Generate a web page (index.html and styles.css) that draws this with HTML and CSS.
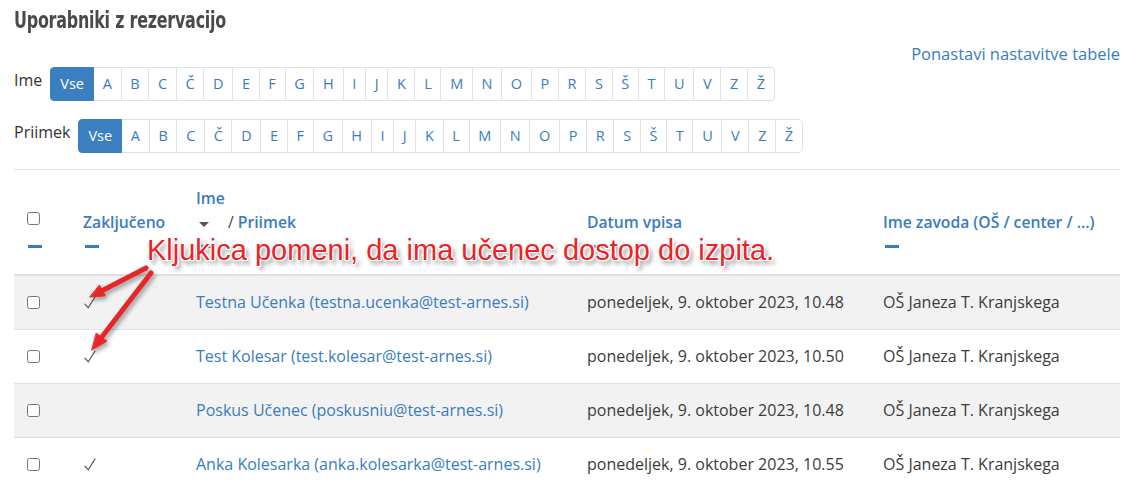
FILE: index.html
```html
<!DOCTYPE html>
<html lang="sl">
<head>
<meta charset="utf-8">
<title>Uporabniki z rezervacijo</title>
<link rel="stylesheet" href="styles.css">
</head>
<body>
<div class="page">
  <h2 class="title">Uporabniki z rezervacijo</h2>
  <div class="reset"><a href="#">Ponastavi nastavitve tabele</a></div>

  <div class="initials">
    <span class="lbl">Ime</span>
    <ul class="pag">
      <li class="active"><a href="#">Vse</a></li>
      <li><a href="#">A</a></li><li><a href="#">B</a></li><li><a href="#">C</a></li><li><a href="#">Č</a></li><li><a href="#">D</a></li><li><a href="#">E</a></li><li><a href="#">F</a></li><li><a href="#">G</a></li><li><a href="#">H</a></li><li><a href="#">I</a></li><li><a href="#">J</a></li><li><a href="#">K</a></li><li><a href="#">L</a></li><li><a href="#">M</a></li><li><a href="#">N</a></li><li><a href="#">O</a></li><li><a href="#">P</a></li><li><a href="#">R</a></li><li><a href="#">S</a></li><li><a href="#">Š</a></li><li><a href="#">T</a></li><li><a href="#">U</a></li><li><a href="#">V</a></li><li><a href="#">Z</a></li><li><a href="#">Ž</a></li>
    </ul>
  </div>
  <div class="initials second">
    <span class="lbl">Priimek</span>
    <ul class="pag">
      <li class="active"><a href="#">Vse</a></li>
      <li><a href="#">A</a></li><li><a href="#">B</a></li><li><a href="#">C</a></li><li><a href="#">Č</a></li><li><a href="#">D</a></li><li><a href="#">E</a></li><li><a href="#">F</a></li><li><a href="#">G</a></li><li><a href="#">H</a></li><li><a href="#">I</a></li><li><a href="#">J</a></li><li><a href="#">K</a></li><li><a href="#">L</a></li><li><a href="#">M</a></li><li><a href="#">N</a></li><li><a href="#">O</a></li><li><a href="#">P</a></li><li><a href="#">R</a></li><li><a href="#">S</a></li><li><a href="#">Š</a></li><li><a href="#">T</a></li><li><a href="#">U</a></li><li><a href="#">V</a></li><li><a href="#">Z</a></li><li><a href="#">Ž</a></li>
    </ul>
  </div>

  <table class="tbl">
    <colgroup>
      <col class="c1"><col class="c2"><col class="c3"><col class="c4"><col class="c5">
    </colgroup>
    <thead>
      <tr>
        <th><div class="hline"><input type="checkbox" class="cb"></div><div class="dashline"><span class="dash"></span></div></th>
        <th><div class="hline"><a href="#">Zaključeno</a></div><div class="dashline"><span class="dash"></span></div></th>
        <th><div class="hline"><a href="#">Ime</a></div><div class="hline"><span class="caret"></span><span class="slash">/</span> <a href="#">Priimek</a></div><div class="dashline"><span class="dash"></span></div></th>
        <th><div class="hline"><a href="#">Datum vpisa</a></div><div class="dashline"><span class="dash"></span></div></th>
        <th><div class="hline"><a href="#">Ime zavoda (OŠ / center / ...)</a></div><div class="dashline"><span class="dash"></span></div></th>
      </tr>
    </thead>
    <tbody>
      <tr class="odd">
        <td><input type="checkbox" class="cb"></td>
        <td><svg class="tick" width="12" height="13" viewBox="0 0 12 13"><path d="M1 8.2 L4.3 11.8 L11 1"/></svg></td>
        <td><a href="#">Testna Učenka (testna.ucenka@test-arnes.si)</a></td>
        <td>ponedeljek, 9. oktober 2023, 10.48</td>
        <td>OŠ Janeza T. Kranjskega</td>
      </tr>
      <tr>
        <td><input type="checkbox" class="cb"></td>
        <td><svg class="tick" width="12" height="13" viewBox="0 0 12 13"><path d="M1 8.2 L4.3 11.8 L11 1"/></svg></td>
        <td><a href="#">Test Kolesar (test.kolesar@test-arnes.si)</a></td>
        <td>ponedeljek, 9. oktober 2023, 10.50</td>
        <td>OŠ Janeza T. Kranjskega</td>
      </tr>
      <tr class="odd">
        <td><input type="checkbox" class="cb"></td>
        <td></td>
        <td><a href="#">Poskus Učenec (poskusniu@test-arnes.si)</a></td>
        <td>ponedeljek, 9. oktober 2023, 10.48</td>
        <td>OŠ Janeza T. Kranjskega</td>
      </tr>
      <tr>
        <td><input type="checkbox" class="cb"></td>
        <td><svg class="tick" width="12" height="13" viewBox="0 0 12 13"><path d="M1 8.2 L4.3 11.8 L11 1"/></svg></td>
        <td><a href="#">Anka Kolesarka (anka.kolesarka@test-arnes.si)</a></td>
        <td>ponedeljek, 9. oktober 2023, 10.55</td>
        <td>OŠ Janeza T. Kranjskega</td>
      </tr>
    </tbody>
  </table>
</div>

<div class="annot">Kljukica pomeni, da ima učenec dostop do izpita.</div>
<svg class="arrows" width="1131" height="503" viewBox="0 0 1131 503" aria-hidden="true">
  <g fill="#e8262a" stroke="#e8262a" stroke-linecap="round">
    <line x1="146" y1="268" x2="102.4" y2="290.5" stroke-width="5"/>
    <polygon points="90,297 105.2,295.8 99.6,285.2" stroke-width="1"/>
    <line x1="151" y1="273" x2="101.6" y2="337.2" stroke-width="5"/>
    <polygon points="92,350 106.8,341.1 96.4,333.3" stroke-width="1"/>
  </g>
</svg>
</body>
</html>
```

FILE: styles.css
```css
* { box-sizing: border-box; }
html, body { margin: 0; padding: 0; background: #fff; }
body {
  font-family: "Open Sans", "Noto Sans", sans-serif;
  font-size: 15px;
  color: #373a3c;
  width: 1131px;
  height: 503px;
  overflow: hidden;
  position: relative;
}
a { color: #3a7cc1; text-decoration: none; }

.page { padding: 0 11px 0 14px; }

.title {
  margin: 0;
  padding-top: 5px;
  height: 40px;
  font-family: "DejaVu Sans Condensed", "DejaVu Sans", sans-serif;
  font-stretch: condensed;
  font-weight: bold;
  font-size: 23px;
  line-height: 30px;
  color: #4a4a4a;
  transform: scaleX(0.77);
  transform-origin: left center;
  letter-spacing: -0.3px;
  white-space: nowrap;
}

.reset {
  text-align: right;
  height: 20px;
  line-height: 20px;
  margin-top: 4px;
  font-size: 16.5px;
}

.initials {
  display: flex;
  align-items: center;
  margin-top: 3px;
}
.initials.second { margin-top: 18px; }
.lbl {
  font-size: 16px;
  color: #333;
  margin-right: 8px;
  position: relative;
  top: -4px;
}
.pag {
  display: flex;
  list-style: none;
  margin: 0;
  padding: 0;
}
.pag li a {
  display: block;
  height: 34px;
  line-height: 32px;
  padding: 0 8.7px;
  border: 1px solid #dee2e6;
  margin-left: -1px;
  font-size: 14.5px;
  color: #3a7cc1;
  background: #fff;
}
.pag li:first-child a { margin-left: 0; border-radius: 4px 0 0 4px; }
.pag li:last-child a { border-radius: 0 4px 4px 0; }
.pag li.active a {
  background: #3a80c0;
  border-color: #3a80c0;
  color: #fff;
  padding: 0 9px;
  position: relative;
  z-index: 1;
}

.tbl {
  margin-top: 16px;
  width: 1106px;
  border-collapse: collapse;
  table-layout: fixed;
  border-top: 1px solid #dee2e6;
}
.c1 { width: 57px; }
.c2 { width: 113px; }
.c3 { width: 391px; }
.c4 { width: 296px; }
.c5 { width: 249px; }

.tbl th {
  text-align: left;
  vertical-align: bottom;
  padding: 16px 12px 16px 12px;
  font-weight: 600;
  font-size: 15.7px;
  border-bottom: 2px solid #dee2e6;
}
.hline { height: 24px; line-height: 24px; display: flex; align-items: center; white-space: nowrap; }
.dashline { height: 24px; display: flex; align-items: center; }
.dash { display: inline-block; width: 14px; height: 3px; background: #3a7cc1; margin-left: 2px; }
.tbl th .cb { position: relative; top: -4px; }
.caret {
  display: inline-block;
  width: 0; height: 0;
  border-left: 5px solid transparent;
  border-right: 5px solid transparent;
  border-top: 5px solid #555;
  margin-left: 3px;
  margin-right: 19px;
  position: relative;
  top: 2px;
}
.slash { color: #444; margin-right: 4px; font-weight: 400; }

.tbl td {
  height: 54px;
  padding: 0 12px;
  vertical-align: middle;
  border-top: 1px solid #dee2e6;
  font-size: 16px;
  color: #3c3c3c;
  white-space: nowrap;
}
.tbl tbody tr:first-child td { border-top: 0; }
.tbl tr.odd td { background: #f2f2f2; }
.cb { width: 13px; height: 13px; margin: 0 0 0 1px; display: block; }
.tick { display: block; margin-left: 1px; fill: none; stroke: #555; stroke-width: 1.2; stroke-linecap: round; stroke-linejoin: round; }

.annot {
  position: absolute;
  left: 147px;
  top: 232px;
  font-family: "Liberation Sans", Arial, sans-serif;
  font-size: 29px;
  line-height: 36px;
  color: #ec2227;
  white-space: nowrap;
  text-shadow:
    -1px -1px 0 #fff, 1px -1px 0 #fff, -1px 1px 0 #fff, 1px 1px 0 #fff,
    0 -1px 0 #fff, 0 1px 0 #fff, -1px 0 0 #fff, 1px 0 0 #fff,
    3px 4px 4px rgba(0,0,0,0.45);
}
.arrows {
  position: absolute;
  left: 0;
  top: 0;
  pointer-events: none;
  filter: drop-shadow(2px 3px 2px rgba(0,0,0,0.35));
}
```
